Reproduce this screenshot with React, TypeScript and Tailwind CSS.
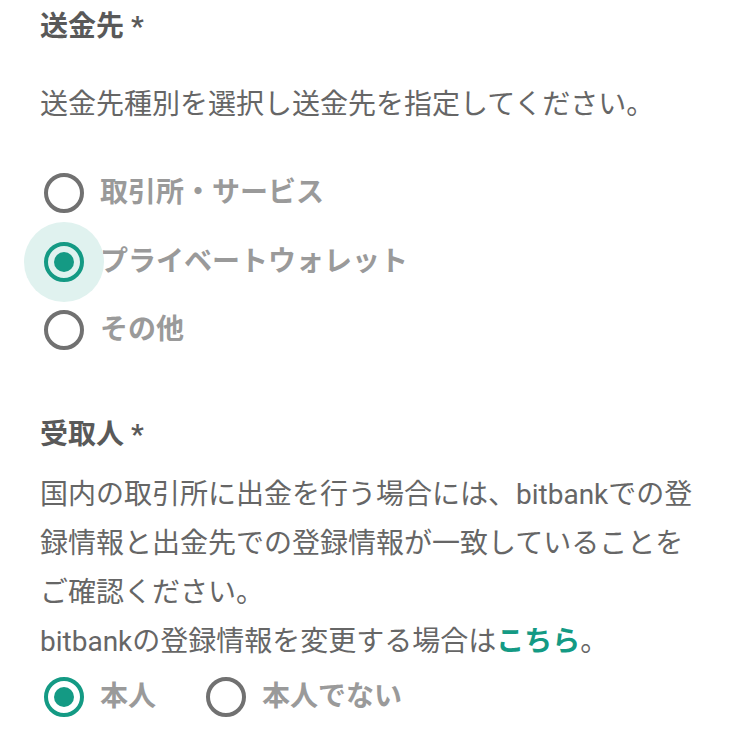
import React, { useState } from 'react';

const font = { fontFamily: 'Roboto, "Noto Sans CJK JP", "Noto Sans", sans-serif' };

type RadioProps = {
  checked: boolean;
  focused?: boolean;
};

const Radio = ({ checked, focused }: RadioProps) => {
  return (
    <div className="relative w-[40px] h-[40px] shrink-0">
      {focused && <div className="absolute -left-[20px] -top-[20px] w-[80px] h-[80px] rounded-full bg-[#e0f2ef]" />}
      <div
        className={`relative w-[40px] h-[40px] rounded-full border-[4px] flex items-center justify-center ${
          checked ? 'border-[#149a84]' : 'border-[#717171]'
        }`}
      >
        {checked && <div className="w-[20px] h-[20px] rounded-full bg-[#149a84]" />}
      </div>
    </div>
  );
};

const destinations = ['取引所・サービス', 'プライベートウォレット', 'その他'];

const App = () => {
  const [destination, setDestination] = useState(1);
  const [recipient, setRecipient] = useState(0);

  return (
    <div className="w-[750px] h-[748px] bg-white pl-[40px] pr-[50px] pt-[7px] text-[#666666]" style={font}>
      <div className="text-[28px] leading-[40px] font-bold text-[#595959]">送金先 *</div>
      <div className="mt-[38px] text-[28px] leading-[40px]">送金先種別を選択し送金先を指定してください。</div>

      <div className="mt-[34px] flex flex-col">
        {destinations.map((label, i) => {
          return (
            <div
              key={label}
              onClick={() => setDestination(i)}
              className="h-[68.5px] flex items-center gap-[16px] pl-[4px] cursor-pointer"
            >
              <Radio checked={destination == i} focused={destination == i} />
              <span className="text-[28px] leading-[40px] font-bold text-[#9a9a9a]">{label}</span>
            </div>
          );
        })}
      </div>

      <div className="mt-[50px] text-[28px] leading-[40px] font-bold text-[#595959]">受取人 *</div>
      <div className="mt-[15px] text-[28px] leading-[49.3px]">
        国内の取引所に出金を行う場合には、bitbankでの登
        <br />
        録情報と出金先での登録情報が一致していることを
        <br />
        ご確認ください。
        <br />
        bitbankの登録情報を変更する場合は<span className="font-bold text-[#149a84]">こちら</span>。
      </div>

      <div className="mt-[5px] h-[50px] flex items-center pl-[4px]">
        <div onClick={() => setRecipient(0)} className="flex items-center gap-[16px] cursor-pointer">
          <Radio checked={recipient == 0} />
          <span className="text-[28px] leading-[40px] font-bold text-[#9a9a9a]">本人</span>
        </div>
        <div onClick={() => setRecipient(1)} className="ml-[50px] flex items-center gap-[16px] cursor-pointer">
          <Radio checked={recipient == 1} />
          <span className="text-[28px] leading-[40px] font-bold text-[#9a9a9a]">本人でない</span>
        </div>
      </div>
    </div>
  );
};

export default App;
